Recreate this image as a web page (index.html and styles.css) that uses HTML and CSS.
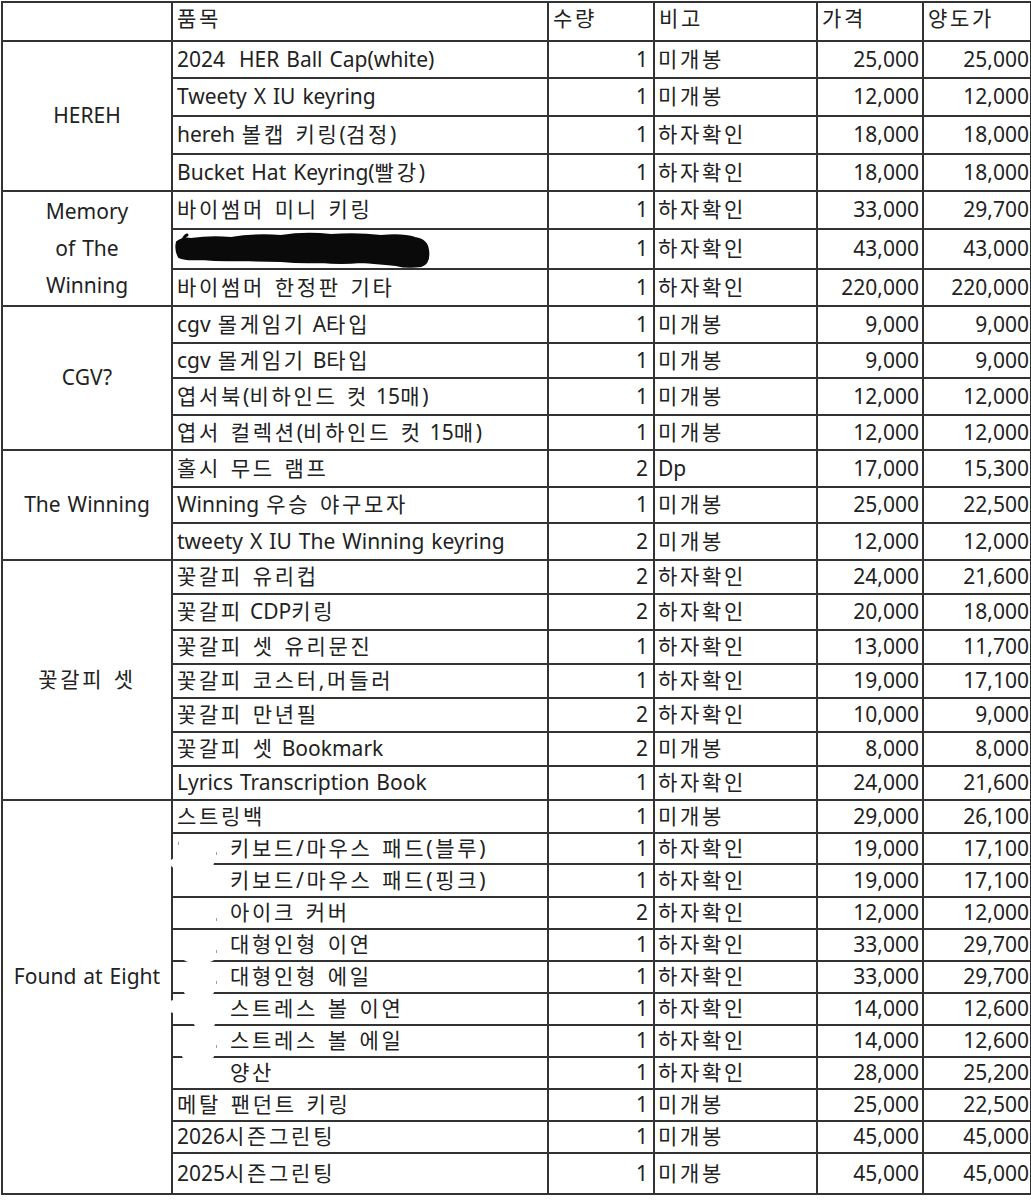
FILE: index.html
```html
<!DOCTYPE html>
<html lang="ko">
<head>
<meta charset="utf-8">
<title>굿즈 목록</title>
<link rel="stylesheet" href="styles.css">
</head>
<body>
<div class="sheet">
<table class="grid">
<colgroup>
<col class="c-group"><col class="c-item"><col class="c-qty"><col class="c-note"><col class="c-price"><col class="c-sale">
</colgroup>
<thead>
<tr class="hd">
<th></th><th class="k">품목</th><th class="k">수량</th><th class="k">비고</th><th class="k">가격</th><th class="k">양도가</th>
</tr>
</thead>
<tbody>
<tr class="r37"><td class="grp" rowspan="4">HEREH</td><td class="item">2024&nbsp; HER Ball Cap(white)</td><td class="qty">1</td><td class="note k">미개봉</td><td class="num">25,000</td><td class="num last">25,000</td></tr>
<tr class="r38"><td class="item">Tweety X IU keyring</td><td class="qty">1</td><td class="note k">미개봉</td><td class="num">12,000</td><td class="num last">12,000</td></tr>
<tr class="r38"><td class="item">hereh <span class="k">볼캡 키링</span>(<span class="k">검정</span>)</td><td class="qty">1</td><td class="note k">하자확인</td><td class="num">18,000</td><td class="num last">18,000</td></tr>
<tr class="r37"><td class="item">Bucket Hat Keyring(<span class="k">빨강</span>)</td><td class="qty">1</td><td class="note k">하자확인</td><td class="num">18,000</td><td class="num last">18,000</td></tr>

<tr class="r38"><td class="grp memory" rowspan="3">Memory<br>of The<br>Winning</td><td class="item k">바이썸머 미니 키링</td><td class="qty">1</td><td class="note k">하자확인</td><td class="num">33,000</td><td class="num last">29,700</td></tr>
<tr class="r38"><td class="item scrib"><svg class="scribble" width="256" height="38" viewBox="0 0 256 38" aria-hidden="true"><path d="M2 12 Q8 7 16 9 Q36 6 56 8 Q80 4 106 6 Q130 2 156 5 Q182 3 206 6 Q228 4 240 8 Q252 10 253 20 Q255 33 246 36 Q232 38 221 35 Q200 33 186 32 Q166 34 146 32 Q126 33 106 31 Q86 31 66 30 Q46 31 26 29 Q10 30 4 27 Q0 20 2 12 Z"/><path d="M8 11 Q9 6 12 5" class="tick"/></svg></td><td class="qty">1</td><td class="note k">하자확인</td><td class="num">43,000</td><td class="num last">43,000</td></tr>
<tr class="r37"><td class="item k">바이썸머 한정판 기타</td><td class="qty">1</td><td class="note k">하자확인</td><td class="num">220,000</td><td class="num last">220,000</td></tr>

<tr class="r37"><td class="grp" rowspan="4">CGV?</td><td class="item">cgv <span class="k">몰게임기</span> A<span class="k">타입</span></td><td class="qty">1</td><td class="note k">미개봉</td><td class="num">9,000</td><td class="num last">9,000</td></tr>
<tr class="r35"><td class="item">cgv <span class="k">몰게임기</span> B<span class="k">타입</span></td><td class="qty">1</td><td class="note k">미개봉</td><td class="num">9,000</td><td class="num last">9,000</td></tr>
<tr class="r37"><td class="item"><span class="k">엽서북</span>(<span class="k">비하인드 컷</span> 15<span class="k">매</span>)</td><td class="qty">1</td><td class="note k">미개봉</td><td class="num">12,000</td><td class="num last">12,000</td></tr>
<tr class="r35"><td class="item"><span class="k">엽서 컬렉션</span>(<span class="k">비하인드 컷</span> 15<span class="k">매</span>)</td><td class="qty">1</td><td class="note k">미개봉</td><td class="num">12,000</td><td class="num last">12,000</td></tr>

<tr class="r37"><td class="grp" rowspan="3">The Winning</td><td class="item k">홀시 무드 램프</td><td class="qty">2</td><td class="note">Dp</td><td class="num">17,000</td><td class="num last">15,300</td></tr>
<tr class="r36"><td class="item">Winning <span class="k">우승 야구모자</span></td><td class="qty">1</td><td class="note k">미개봉</td><td class="num">25,000</td><td class="num last">22,500</td></tr>
<tr class="r37"><td class="item">tweety X IU The Winning keyring</td><td class="qty">2</td><td class="note k">미개봉</td><td class="num">12,000</td><td class="num last">12,000</td></tr>

<tr class="r34"><td class="grp k" rowspan="7">꽃갈피 셋</td><td class="item k">꽃갈피 유리컵</td><td class="qty">2</td><td class="note k">하자확인</td><td class="num">24,000</td><td class="num last">21,600</td></tr>
<tr class="r36"><td class="item"><span class="k">꽃갈피</span> CDP<span class="k">키링</span></td><td class="qty">2</td><td class="note k">하자확인</td><td class="num">20,000</td><td class="num last">18,000</td></tr>
<tr class="r34"><td class="item k">꽃갈피 셋 유리문진</td><td class="qty">1</td><td class="note k">하자확인</td><td class="num">13,000</td><td class="num last">11,700</td></tr>
<tr class="r34"><td class="item k">꽃갈피 코스터,머들러</td><td class="qty">1</td><td class="note k">하자확인</td><td class="num">19,000</td><td class="num last">17,100</td></tr>
<tr class="r34"><td class="item k">꽃갈피 만년필</td><td class="qty">2</td><td class="note k">하자확인</td><td class="num">10,000</td><td class="num last">9,000</td></tr>
<tr class="r34"><td class="item"><span class="k">꽃갈피 셋</span> Bookmark</td><td class="qty">2</td><td class="note k">미개봉</td><td class="num">8,000</td><td class="num last">8,000</td></tr>
<tr class="r34"><td class="item">Lyrics Transcription Book</td><td class="qty">1</td><td class="note k">하자확인</td><td class="num">24,000</td><td class="num last">21,600</td></tr>

<tr class="r33"><td class="grp" rowspan="12"><div class="lift">Found at Eight</div></td><td class="item k">스트링백</td><td class="qty">1</td><td class="note k">미개봉</td><td class="num">29,000</td><td class="num last">26,100</td></tr>
<tr class="r31"><td class="item ind k">키보드/마우스 패드(블루)</td><td class="qty">1</td><td class="note k">하자확인</td><td class="num">19,000</td><td class="num last">17,100</td></tr>
<tr class="r33"><td class="item ind k">키보드/마우스 패드(핑크)</td><td class="qty">1</td><td class="note k">하자확인</td><td class="num">19,000</td><td class="num last">17,100</td></tr>
<tr class="r32"><td class="item ind k">아이크 커버</td><td class="qty">2</td><td class="note k">하자확인</td><td class="num">12,000</td><td class="num last">12,000</td></tr>
<tr class="r32"><td class="item ind k">대형인형 이연</td><td class="qty">1</td><td class="note k">하자확인</td><td class="num">33,000</td><td class="num last">29,700</td></tr>
<tr class="r32"><td class="item ind k">대형인형 에일</td><td class="qty">1</td><td class="note k">하자확인</td><td class="num">33,000</td><td class="num last">29,700</td></tr>
<tr class="r32"><td class="item ind k">스트레스 볼 이연</td><td class="qty">1</td><td class="note k">하자확인</td><td class="num">14,000</td><td class="num last">12,600</td></tr>
<tr class="r32"><td class="item ind k">스트레스 볼 에일</td><td class="qty">1</td><td class="note k">하자확인</td><td class="num">14,000</td><td class="num last">12,600</td></tr>
<tr class="r32"><td class="item ind k">양산</td><td class="qty">1</td><td class="note k">하자확인</td><td class="num">28,000</td><td class="num last">25,200</td></tr>
<tr class="r32"><td class="item k">메탈 팬던트 키링</td><td class="qty">1</td><td class="note k">미개봉</td><td class="num">25,000</td><td class="num last">22,500</td></tr>
<tr class="r32"><td class="item">2026<span class="k">시즌그린팅</span></td><td class="qty">1</td><td class="note k">미개봉</td><td class="num">45,000</td><td class="num last">45,000</td></tr>
<tr class="r41"><td class="item">2025<span class="k">시즌그린팅</span></td><td class="qty">1</td><td class="note k">미개봉</td><td class="num">45,000</td><td class="num last">45,000</td></tr>
</tbody>
</table>
<div class="wipe w1"></div>
<div class="wipe w2"></div>
<div class="wipe w3"></div>
<div class="wipe w4"></div>
<div class="wipe w5"></div>
<div class="wipe w6"></div>
<div class="dot d1"></div>
<div class="dot d2"></div>
<div class="dot d3"></div>
<div class="dot d4"></div>
<div class="dot d5"></div>
<div class="dot d6"></div>
</div>
</body>
</html>
```
FILE: styles.css
```css
html, body {
  margin: 0;
  padding: 0;
  background: #ffffff;
}

.sheet {
  position: relative;
  padding: 1px 0 0 1px;
  width: 1031px;
  box-sizing: border-box;
}

.grid {
  border-collapse: collapse;
  table-layout: fixed;
  width: 1029px;
  font-family: "Noto Sans", "Noto Sans CJK KR", sans-serif;
  font-size: 21px;
  color: #222222;
  line-height: 1.2;
  word-spacing: 1.5px;
}

.c-group { width: 170px; }
.c-item { width: 376px; }
.c-qty { width: 106px; }
.c-note { width: 163px; }
.c-price { width: 106px; }
.c-sale { width: 108px; }

.grid th,
.grid td {
  border: 2px solid #333333;
  padding: 0 4px;
  vertical-align: middle;
  white-space: nowrap;
}

.grid th {
  font-weight: normal;
  text-align: left;
  padding-bottom: 6px;
}

.k {
  letter-spacing: 2.7px;
}

.hd { height: 39px; }
.r31 { height: 31px; }
.r32 { height: 32px; }
.r33 { height: 33px; }
.r34 { height: 34px; }
.r35 { height: 35px; }
.r36 { height: 36px; }
.r37 { height: 37px; }
.r38 { height: 38px; }
.r41 { height: 41px; }

.grid td.grp {
  text-align: center;
}

.grid td.memory {
  line-height: 37px;
}

.lift {
  margin-bottom: 40px;
}

.grid td.item {
  text-align: left;
}

.grid td.ind {
  padding-left: 57px;
}

.grid td.qty {
  text-align: right;
  padding-right: 5px;
}

.grid td.note {
  text-align: left;
  padding-left: 3px;
}

.grid td.num {
  text-align: right;
  padding-right: 3px;
}

.grid td.num.last {
  padding-right: 1px;
}

.grid td.scrib {
  padding: 0 0 0 2px;
}

.scribble {
  display: block;
}

.scribble path {
  fill: #0a0a0a;
  stroke: #0a0a0a;
  stroke-width: 2;
  stroke-linejoin: round;
}

.scribble .tick {
  fill: none;
  stroke-width: 3;
  stroke-linecap: round;
}

.wipe {
  position: absolute;
  background: #ffffff;
  border-radius: 50%;
}

.w1 { left: 170px; top: 854px; width: 44px; height: 18px; }
.w2 { left: 184px; top: 956px; width: 30px; height: 7px; }
.w3 { left: 184px; top: 989px; width: 30px; height: 7px; }
.w4 { left: 169px; top: 1000px; width: 8px; height: 13px; }
.w5 { left: 194px; top: 1021px; width: 21px; height: 7px; }
.w6 { left: 182px; top: 1053px; width: 32px; height: 7px; }

.dot {
  position: absolute;
  width: 1px;
  height: 3px;
  background: #a0a0a0;
}

.d1 { left: 178px; top: 842px; }
.d2 { left: 216px; top: 852px; }
.d3 { left: 216px; top: 918px; }
.d4 { left: 216px; top: 950px; }
.d5 { left: 216px; top: 981px; }
.d6 { left: 216px; top: 1045px; }
```
